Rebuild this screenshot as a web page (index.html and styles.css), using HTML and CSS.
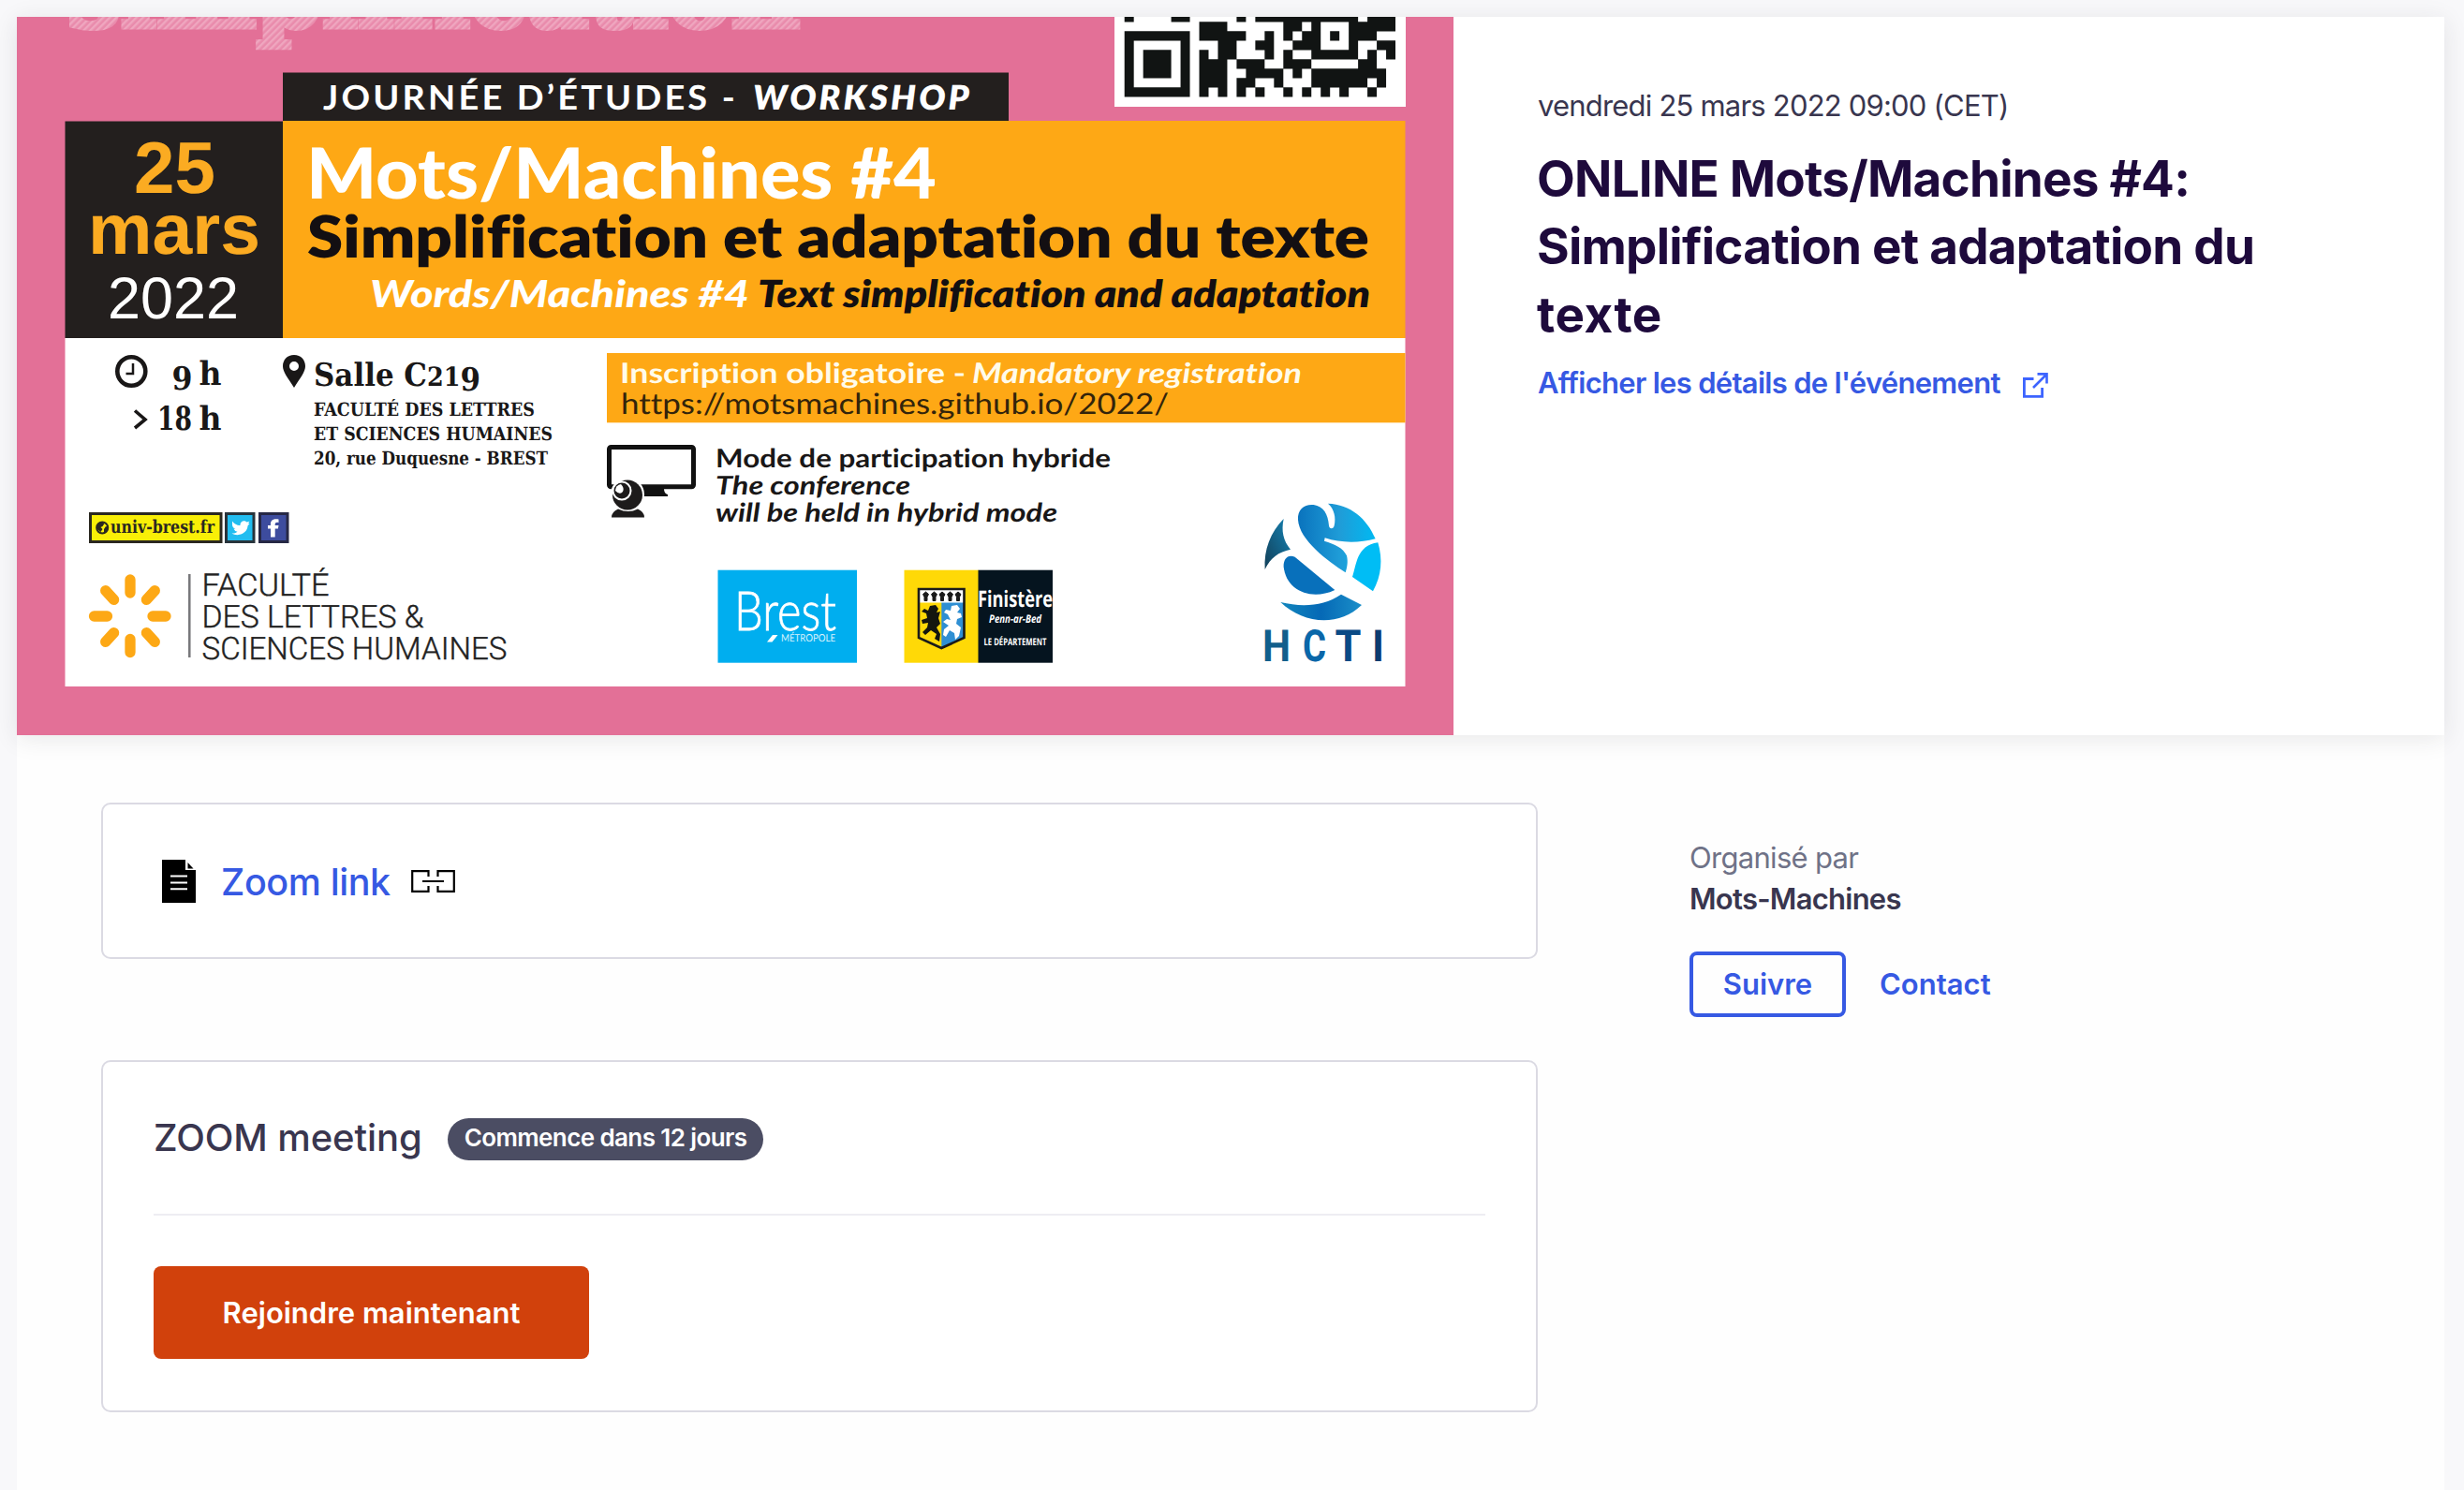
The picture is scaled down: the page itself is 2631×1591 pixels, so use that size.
FILE: index.html
```html
<!DOCTYPE html>
<html lang="fr">
<head>
<meta charset="utf-8">
<title>ONLINE Mots/Machines #4</title>
<link rel="stylesheet" href="styles.css">
</head>
<body>
<div class="page">
  <header class="hero">
    <svg class="poster" viewBox="18 18 1534 767" width="1534" height="767">
      <defs>
        <pattern id="chalk" width="5" height="5" patternUnits="userSpaceOnUse" patternTransform="rotate(45)">
          <rect width="5" height="5" fill="#e98bac"/><rect width="2.400" height="5" fill="#efa6bf"/>
        </pattern>
        <linearGradient id="sky" x1="0" y1="0" x2="1" y2="0"><stop offset="0" stop-color="#0a73bd"/><stop offset=".55" stop-color="#1f9dd8"/><stop offset="1" stop-color="#00b9f2"/></linearGradient>
        <linearGradient id="deep" x1="0" y1="1" x2="1" y2="0"><stop offset="0" stop-color="#123f58"/><stop offset="1" stop-color="#1583b4"/></linearGradient>
        <linearGradient id="sea" x1="0" y1="0" x2="1" y2="0"><stop offset="0" stop-color="#1286bd"/><stop offset=".5" stop-color="#0569b6"/><stop offset="1" stop-color="#1b8fc9"/></linearGradient>
      </defs>
      <rect x="18" y="18" width="1534" height="767" fill="#e37097"/>
      <text class="slab" x="72" y="29" font-size="104" textLength="782" lengthAdjust="spacingAndGlyphs" fill="url(#chalk)" stroke="url(#chalk)" stroke-width="5">simplification</text>

      <!-- QR code -->
      <rect x="1190" y="18" width="311" height="96" fill="#fff"/>
      <path transform="translate(1200.7 33.3) scale(9.977 10)" stroke="#111413" stroke-width="1.03" fill="none" d="M0 -1.5h1M5 -1.5h2M12 -1.5h1M14 -1.5h11M26 -1.5h3M8 -.5h3M17 -.5h2M20 -.5h1M24 -.5h5M0 .5h7M8 .5h5M15 .5h1M17 .5h1M19 .5h2M22 .5h1M24 .5h3M0 1.5h1M6 1.5h1M10 1.5h2M14 1.5h2M18 1.5h3M24 1.5h1M27 1.5h2M0 2.5h1M2 2.5h3M6 2.5h1M8 2.5h1M10 2.5h2M15 2.5h1M17 2.5h1M20 2.5h5M26 2.5h1M28 2.5h1M0 3.5h1M2 3.5h3M6 3.5h1M8 3.5h3M12 3.5h3M17 3.5h3M25 3.5h2M0 4.5h1M2 4.5h3M6 4.5h1M8 4.5h3M13 4.5h4M18 4.5h1M20 4.5h8M0 5.5h1M6 5.5h1M8 5.5h3M12 5.5h2M16 5.5h1M20 5.5h6M27 5.5h1M0 6.5h7M8 6.5h1M10 6.5h1M12 6.5h1M14 6.5h1M17 6.5h1M19 6.5h1M21 6.5h1M23 6.5h1M26 6.5h1"/>

      <!-- Title block -->
      <rect x="302" y="77.500" width="775" height="52" fill="#231f1e"/>
      <rect x="302" y="129" width="1198.500" height="232.500" fill="#fea815"/>
      <rect x="69.500" y="129.500" width="232.500" height="231.500" fill="#231f1e"/>
      <rect x="69.500" y="361" width="1431" height="372" fill="#fff"/>
      <g class="lato">
        <text x="345" y="117.300" font-size="36" font-weight="700" fill="#fff" textLength="443" letter-spacing="3" lengthAdjust="spacingAndGlyphs">JOURNÉE D’ÉTUDES -</text>
        <text x="804" y="117.300" font-size="36" font-weight="800" font-style="italic" fill="#fff" textLength="234" letter-spacing="3" lengthAdjust="spacingAndGlyphs">WORKSHOP</text>
        <text x="327" y="212" font-size="75" font-weight="900" fill="#fff" textLength="673" lengthAdjust="spacingAndGlyphs">Mots/Machines #4</text>
        <text x="328" y="274.700" font-size="62" font-weight="800" fill="#130f12" textLength="1134" lengthAdjust="spacingAndGlyphs">Simplification et adaptation du texte</text>
        <text x="395" y="328.300" font-size="40" font-weight="900" font-style="italic" fill="#fff" textLength="405" lengthAdjust="spacingAndGlyphs">Words/Machines #4</text>
        <text x="809" y="328.300" font-size="40" font-weight="800" font-style="italic" fill="#130f12" textLength="654" lengthAdjust="spacingAndGlyphs">Text simplification and adaptation</text>
      </g>
      <g font-family="Liberation Sans, Arial, sans-serif">
        <text x="143" y="206" font-size="78" font-weight="700" fill="#fbab22" textLength="87" lengthAdjust="spacingAndGlyphs">25</text>
        <text x="94" y="271" font-size="76" font-weight="700" fill="#fbab22" textLength="184" lengthAdjust="spacingAndGlyphs">mars</text>
        <text x="115" y="340" font-size="63" fill="#fff" textLength="140" lengthAdjust="spacingAndGlyphs">2022</text>
      </g>

      <!-- Time and place -->
      <ellipse cx="140.300" cy="396.500" rx="15" ry="15.300" fill="none" stroke="#191717" stroke-width="4.600"/>
      <path d="M142 388v11h-7.500" fill="none" stroke="#191717" stroke-width="2.500"/>
      <g class="slab" fill="#191717">
        <text x="183.500" y="416" font-size="34" textLength="22" lengthAdjust="spacingAndGlyphs">9</text>
        <text x="212.500" y="411" font-size="35" textLength="24" lengthAdjust="spacingAndGlyphs">h</text>
        <text x="168" y="459" font-size="35" textLength="37" lengthAdjust="spacingAndGlyphs">18</text>
        <text x="212.500" y="459" font-size="35" textLength="24" lengthAdjust="spacingAndGlyphs">h</text>
        <text x="335" y="412" font-size="34" textLength="178" lengthAdjust="spacingAndGlyphs">Salle C<tspan font-size="28">21</tspan><tspan dy="5">9</tspan></text>
        <text x="335" y="443.500" font-size="19.500" textLength="236" lengthAdjust="spacingAndGlyphs">FACULTÉ DES LETTRES</text>
        <text x="335" y="470" font-size="19.500" textLength="255" lengthAdjust="spacingAndGlyphs">ET SCIENCES HUMAINES</text>
        <text x="335" y="496" font-size="19.500" textLength="250" lengthAdjust="spacingAndGlyphs">20, rue Duquesne - BREST</text>
      </g>
      <path d="M144 438.500l11 9.500-11 9" fill="none" stroke="#191717" stroke-width="3.600"/>
      <path fill="#191717" fill-rule="evenodd" d="M314 379c-7.500 0-12 5.500-12 12 0 6 5 12 12 23 7-11 12-17 12-23 0-6.500-4.500-12-12-12zm0 7a5 5 0 1 1 0 10 5 5 0 0 1 0-10z"/>

      <!-- Web and social badges -->
      <rect x="96.500" y="548.500" width="139.500" height="30" fill="#f9ef07" stroke="#2a2820" stroke-width="3"/>
      <circle cx="109.200" cy="563.500" r="6" fill="#f9ef07" stroke="#2a2820" stroke-width="2"/>
      <path fill="#2a2820" d="M103.500 560l5-3 3 2-2 3-2 1 2 2-2 3-4-3zM113 562l3 1-1 4-4 2 0-4z"/>
      <text class="slab" x="118" y="569" font-size="19" fill="#2a2820" textLength="111" lengthAdjust="spacingAndGlyphs">univ-brest.fr</text>
      <rect x="241.500" y="548.500" width="29.500" height="30" fill="#22bdf0" stroke="#28343c" stroke-width="3"/>
      <path fill="#fff" d="M248 556.500q3.500 4.500 8.500 4.500c-.5-4 4-6.500 7-3.500l3-.8-1.500 2.300 1.500 0-2 2.500c0 7-9.500 12.500-17 8 3 0 4.500-.5 6-1.800q-3-.5-4-3h2q-3.500-1.500-3.500-4.500z"/>
      <rect x="277.500" y="548.500" width="29.500" height="30" fill="#3d4c9e" stroke="#262845" stroke-width="3"/>
      <path fill="#fff" d="M289 573.500v-9h-3v-3.500h3c-.5-5 2-7.500 8.500-6.500v3.500c-3-.5-4 .2-3.800 3h3.800l-.6 3.500h-3.200v9z"/>

      <!-- Faculty logo -->
      <g stroke="#fda815" stroke-width="11.300" stroke-linecap="round">
        <path d="M139 619v14M139 682.500v14M100.500 658h14M163 658h14M112.700 630.700l8.900 9.600M165.300 630.700l-8.900 9.600M112.700 685.300l8.900-9.600M165.300 685.300l-8.900-9.600"/>
      </g>
      <path d="M202.300 613v89" stroke="#77777a" stroke-width="2.500"/>
      <g font-family="Roboto, sans-serif" font-weight="300" fill="#222" stroke="#222" stroke-width=".4">
        <text x="215.500" y="636" font-size="33" textLength="136" lengthAdjust="spacingAndGlyphs">FACULTÉ</text>
        <text x="215.500" y="670" font-size="33.500" textLength="237" lengthAdjust="spacingAndGlyphs">DES LETTRES &amp;</text>
        <text x="215.500" y="703.700" font-size="33.500" textLength="326" lengthAdjust="spacingAndGlyphs">SCIENCES HUMAINES</text>
      </g>

      <!-- Registration -->
      <rect x="648" y="377" width="852.500" height="74.300" fill="#fea815"/>
      <g class="lato">
        <text x="662" y="409" font-size="30" font-weight="700" fill="#fffbea" textLength="369" lengthAdjust="spacingAndGlyphs">Inscription obligatoire -</text>
        <text x="1038" y="409" font-size="30" font-weight="700" font-style="italic" fill="#fffbea" textLength="352" lengthAdjust="spacingAndGlyphs">Mandatory registration</text>
        <text x="663" y="442" font-size="31" fill="#33240b" textLength="585" lengthAdjust="spacingAndGlyphs">https://motsmachines.github.io/2022/</text>
        <g fill="#191717" font-size="27.500" font-weight="700">
          <text x="764" y="498.700" textLength="422" lengthAdjust="spacingAndGlyphs">Mode de participation hybride</text>
          <text x="764" y="527.500" font-style="italic" textLength="208" lengthAdjust="spacingAndGlyphs">The conference</text>
          <text x="764" y="556.700" font-style="italic" textLength="365" lengthAdjust="spacingAndGlyphs">will be held in hybrid mode</text>
        </g>
      </g>
      <rect x="650.500" y="477.500" width="90" height="42.300" rx="2" fill="#fff" stroke="#111" stroke-width="5"/>
      <path d="M684 522h25q0 5 4 6v2h-29z" fill="#111"/>
      <circle cx="670" cy="528" r="18" fill="#fff"/>
      <circle cx="670" cy="528.500" r="16" fill="#1d1b1b"/>
      <circle cx="664" cy="524" r="9.500" fill="#1d1b1b" stroke="#fff" stroke-width="2"/>
      <path d="M657 524a7 7 0 0 1 6-7q4 4 2 8-3 4-8-1z" fill="#fff"/>
      <path d="M653 552.500q0-6 7-9 11 5 21 0 7 3 7 9z" fill="#1d1b1b"/>

      <!-- Brest Métropole -->
      <rect x="766.500" y="608.700" width="148.500" height="99" fill="#00aeef"/>
      <text x="784" y="673" class="lato" font-size="58" font-weight="300" fill="#fff" stroke="#fff" stroke-width=".8" textLength="109" lengthAdjust="spacingAndGlyphs">Brest</text>
      <path d="M819 685.500l6-7.500h5.500l-6 7.500z" fill="#fff"/>
      <text x="834" y="684.700" class="lato" font-size="11" fill="#d9f2fd" textLength="58" lengthAdjust="spacingAndGlyphs">MÉTROPOLE</text>

      <!-- Finistère -->
      <rect x="965.500" y="608.700" width="79.500" height="99" fill="#ffd907"/>
      <rect x="1044.500" y="608.700" width="79.500" height="99" fill="#05141f"/>
      <path d="M981 629h48.500v52l-24.200 11-24.300-11z" fill="#ffd907"/>
      <path d="M1005.300 643h24.200v38l-24.200 11z" fill="#2f8fd3"/>
      <path d="M981 629h48.500v14.500H981z" fill="#fff"/>
      <path d="M987 641.500v-4l-1.500-3 3-2.500 3 2.500-1.500 3v4zM996 641.500v-4l-1.500-3 3-2.500 3 2.500-1.500 3v4zM1004.500 641.500v-4l-1.500-3 3-2.500 3 2.500-1.500 3v4zM1013 641.500v-4l-1.500-3 3-2.500 3 2.500-1.500 3v4zM1021.500 641.500v-4l-1.500-3 3-2.500 3 2.500-1.500 3v4z" fill="#1a1a1a" stroke="#1a1a1a" stroke-width="1"/>
      <path d="M993 647l6-1 3 4-2 4 4-1-2 7 2 6-4 4 4 7-1 8-5-3 2-5-6-4-6 5-3-3 5-5 1-5-6 1-1-4 6-2-1-5-5-2 3-3 4 2z" fill="#14160f"/>
      <path d="M1016 647l6-1 3 4-3 4 4 1 1 4-5 2-1 5 5 4-2 9-4 4-1-7-5-3-4 7-3-2 1-6 5-4-6-4 4-3 4 1-3-6-4-2 2-3 5 1z" fill="#fff"/>
      <path d="M981 629h48.500v52l-24.200 11-24.300-11z" fill="none" stroke="#1a1a1a" stroke-width="2.600"/>
      <g font-family="Open Sans, sans-serif" fill="#fff">
        <text x="1044" y="648" font-size="24" font-weight="700" textLength="80" lengthAdjust="spacingAndGlyphs">Finistère</text>
        <text x="1056" y="665" font-size="12" font-weight="700" font-style="italic" textLength="56" lengthAdjust="spacingAndGlyphs">Penn-ar-Bed</text>
        <text x="1050.500" y="689" font-size="10.500" font-weight="700" textLength="67" lengthAdjust="spacingAndGlyphs">LE DÉPARTEMENT</text>
      </g>

      <!-- HCTI logo -->
      <g transform="translate(1180 360) scale(.33333)">
        <path fill="url(#deep)" d="M572 582C530 625 508 680 512 744 530 706 556 688 594 680 570 652 564 620 572 582z"/>
        <path fill="url(#sky)" d="M618 585C616 550 640 534 668 537 700 542 714 566 717 604 718 616 732 616 734 604 740 578 734 550 714 533 786 536 838 580 866 646 814 660 754 660 704 643L702 653C736 664 762 674 774 700 779 720 775 738 770 754 712 716 622 650 618 585z"/>
        <path fill="#00bdf5" d="M874 658C890 712 886 764 858 814L792 768C806 730 804 668 874 658z"/>
        <path fill="#0870bb" d="M572 736C570 710 586 694 608 704L736 810C660 846 580 812 572 736z"/>
        <path fill="url(#sea)" d="M562 849C632 866 700 862 756 824L822 858C750 928 636 920 562 849z"/>
      </g>
      <g font-family="Roboto, sans-serif" font-size="47" font-weight="700">
        <text x="1348" y="706" fill="#115f8c" textLength="30" lengthAdjust="spacingAndGlyphs">H</text>
        <text x="1391" y="706" fill="#0a67a9" textLength="25" lengthAdjust="spacingAndGlyphs">C</text>
        <text x="1425.500" y="706" fill="#0b4a85" textLength="28" lengthAdjust="spacingAndGlyphs">T</text>
        <text x="1465" y="706" fill="#0d3c70" textLength="13" lengthAdjust="spacingAndGlyphs">I</text>
      </g>
    </svg>
    <div class="info">
      <p class="date">vendredi 25 mars 2022 09:00 (CET)</p>
      <h1 class="title">ONLINE Mots/Machines #4:<br>Simplification et adaptation du<br><span class="last">texte</span></h1>
      <a class="details">Afficher les détails de l'événement
        <svg class="ext" width="27" height="27" viewBox="0 0 27 27" fill="none" stroke="#3d64ff" stroke-width="2.800"><path d="M11.500 6.500H1.400v18.800h19.200V16"/><path d="M15.500 1.400h10v10M25 2L11 16" stroke-width="2.600"/></svg>
      </a>
    </div>
  </header>
  <div class="content">
    <main class="main">
      <section class="card link-card">
        <svg width="36" height="46" viewBox="0 0 36 46"><path d="M0 0h25v11h11v35H0z"/><path d="M27.500 3v6.500h6z"/><path d="M9 17.500h18M9 24.500h18M9 31.300h18" stroke="#fff" stroke-width="2"/></svg>
        <a class="zoom-link">Zoom link</a>
        <svg width="47" height="24" viewBox="0 0 47 24" fill="none" stroke="#000" stroke-width="2.200"><path d="M18.500 7V1.200H1.200v21.600h17.300V17M28.500 7V1.200h17.300v21.600H28.500V17M12 12h23"/></svg>
      </section>
      <section class="card meeting">
        <div class="meeting-head"><h2>ZOOM meeting</h2><span class="badge">Commence dans 12 jours</span></div>
        <button class="join">Rejoindre maintenant</button>
      </section>
    </main>
    <aside class="side">
      <p class="by">Organisé par</p>
      <p class="org">Mots-Machines</p>
      <div class="actions"><button class="follow">Suivre</button><a class="contact">Contact</a></div>
    </aside>
  </div>
</div>
</body>
</html>
```
FILE: styles.css
```css
* { box-sizing: border-box; }
body {
  margin: 0;
  background: #f8f8fa;
  font-family: Inter, "Liberation Sans", sans-serif;
  font-size: 31px;
  line-height: 44px;
  color: #39364f;
}
h1, h2, p { margin: 0; }
button { font: inherit; background: none; border: 0; }

.page {
  width: 2592px;
  min-height: 1573px;
  margin: 18px 0 0 18px;
  background: #fefefe;
}
.hero {
  position: relative;
  display: flex;
  height: 767px;
  background: #fff;
  box-shadow: 0 4px 24px rgba(40, 44, 53, .1);
}
.poster {
  display: block;
  flex: none;
  text-rendering: geometricPrecision;
  font-variant-ligatures: none;
}
.lato { font-family: Lato, sans-serif; }
.slab { font-family: "DejaVu Serif Condensed", "DejaVu Serif", serif; font-weight: 700; }

.info { padding: 73px 0 0 90px; }
.date { letter-spacing: -.8px; }
.title {
  margin: 20px 0 15px -1px;
  font-size: 53px;
  line-height: 72.3px;
  letter-spacing: -.78px;
  font-weight: 700;
  color: #1e0a3c;
}
.last { letter-spacing: .5px; }
.details {
  display: flex;
  align-items: center;
  font-weight: 600;
  letter-spacing: -.7px;
  color: #3659e3;
}
.ext { margin: 6px 0 0 24px; }

.content { display: flex; padding: 72px 90px 0; }
.main { width: 1534px; }
.card {
  border: 2px solid #dbdae3;
  border-radius: 10px;
  background: #fff;
}
.link-card {
  display: flex;
  align-items: center;
  height: 167px;
  padding-left: 63px;
  margin-bottom: 108px;
}
.zoom-link {
  margin: 2px 22px 0 27px;
  font-size: 39.5px;
  font-weight: 500;
  letter-spacing: -.4px;
  color: #3659e3;
}
.meeting { height: 376px; padding: 0 54px; }
.meeting-head {
  display: flex;
  align-items: center;
  height: 164px;
  border-bottom: 2px solid #eeedf2;
}
.meeting h2 {
  font-size: 40px;
  font-weight: 500;
  letter-spacing: -.1px;
}
.badge {
  height: 45px;
  margin: 3px 0 0 27px;
  padding: 0 18px;
  border-radius: 23px;
  background: #4b4d63;
  color: #fff;
  font-size: 26px;
  line-height: 42px;
  font-weight: 600;
  letter-spacing: -.6px;
}
.join {
  display: block;
  width: 465px;
  height: 99px;
  margin-top: 54px;
  padding: 1px 0 0;
  border-radius: 8px;
  background: #d1410c;
  color: #fff;
  font-weight: 600;
}
.side { padding: 37px 0 0 162px; }
.by { color: #6f7287; letter-spacing: -.7px; }
.org { font-weight: 600; letter-spacing: -.75px; }
.actions { display: flex; align-items: center; gap: 36px; margin-top: 34px; }
.follow {
  width: 167px;
  height: 70px;
  padding: 0;
  border: 4px solid #3659e3;
  border-radius: 8px;
  color: #3659e3;
  font-weight: 600;
}
.contact { color: #3659e3; font-weight: 600; }
```
